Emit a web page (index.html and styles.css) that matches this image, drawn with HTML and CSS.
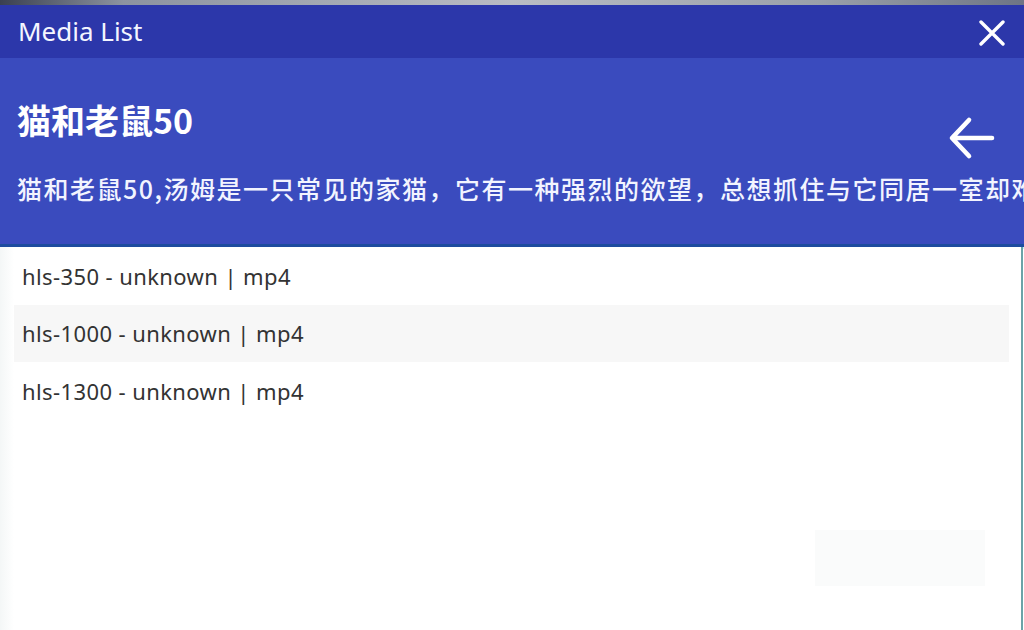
FILE: index.html
```html
<!DOCTYPE html>
<html lang="zh">
<head>
<meta charset="utf-8">
<title>Media List</title>
<link rel="stylesheet" href="styles.css">
</head>
<body>
<div class="topstrip"></div>
<div class="window">
  <div class="titlebar">
    <span class="title">Media List</span>
    <svg class="close" width="26" height="26" viewBox="0 0 26 26"><path d="M2 2 L24 24 M24 2 L2 24" stroke="#fff" stroke-width="3.4" stroke-linecap="round" fill="none"/></svg>
  </div>
  <div class="header">
    <div class="header-top">
      <h1 class="show-title">猫和老鼠50</h1>
      <svg class="back" width="48" height="44" viewBox="0 0 48 44"><path d="M44 22 H5 M21 4 L4 22 L21 40" stroke="#fff" stroke-width="4.6" stroke-linecap="round" stroke-linejoin="round" fill="none"/></svg>
    </div>
    <p class="desc">猫和老鼠50,汤姆是一只常见的家猫，它有一种强烈的欲望，总想抓住与它同居一室却难以抓到的老鼠杰瑞。</p>
  </div>
  <div class="body">
    <ul class="list">
      <li class="row">hls-350 - unknown | mp4</li>
      <li class="row alt">hls-1000 - unknown | mp4</li>
      <li class="row">hls-1300 - unknown | mp4</li>
    </ul>
    <div class="footer"><span class="ghost-btn"></span></div>
  </div>
</div>
</body>
</html>
```
FILE: styles.css
```css
* { box-sizing: border-box; }
html, body { margin: 0; padding: 0; }
body {
  width: 1024px;
  height: 630px;
  overflow: hidden;
  background: #fff;
  font-family: "Noto Sans", "Noto Sans CJK SC", sans-serif;
}
.topstrip {
  height: 5px;
  background: linear-gradient(90deg, #3a4050 0%, #8c93a0 12%, #b9bcc4 50%, #9aa0aa 80%, #6e7585 100%);
}
.window {
  display: flex;
  flex-direction: column;
  height: 625px;
}
.titlebar {
  height: 53px;
  background: #2c37aa;
  display: flex;
  align-items: center;
  justify-content: space-between;
  padding: 0 19px 0 18px;
}
.title {
  color: #f4f6ff;
  font-size: 26px;
  line-height: 1;
  margin-top: -1px;
}
.close { display: block; margin-top: 2px; }
.header {
  background: #3a4bbe;
  height: 189px;
  padding: 0 0 0 17px;
  border-bottom: 3px solid #1d4c9f;
  box-shadow: 0 2px 0 #c6f1fb;
  overflow: hidden;
}
.header-top {
  display: flex;
  align-items: flex-start;
  justify-content: space-between;
  padding-top: 40px;
  padding-right: 28px;
}
.show-title {
  margin: 0;
  color: #fff;
  font-family: "Noto Sans CJK SC", sans-serif;
  font-weight: 700;
  font-size: 34px;
  line-height: 44px;
}
.back { display: block; margin-top: 18px; }
.desc {
  margin: 11px 0 0;
  color: #f2f4ff;
  font-family: "Noto Sans CJK SC", sans-serif;
  font-weight: 500;
  font-size: 25px;
  line-height: 34px;
  letter-spacing: 1.5px;
  white-space: nowrap;
  overflow: hidden;
  text-overflow: clip;
}
.body {
  flex: 1;
  display: flex;
  flex-direction: column;
  padding: 0 0 0 14px;
  border-right: 2px solid #6aa3a8;
  margin-right: 1px;
  background: linear-gradient(90deg, #f4f7f7 0, #fff 14px);
}
.list {
  list-style: none;
  margin: 0;
  padding: 0;
  width: 995px;
}
.row {
  height: 57.5px;
  display: flex;
  align-items: center;
  padding-left: 8px;
  color: #333;
  font-size: 22px;
  letter-spacing: 0.4px;
  background: #fff;
}
.row.alt { background: #f7f7f7; }
.footer {
  display: flex;
  justify-content: flex-end;
  padding: 110px 36px 0 0;
}
.ghost-btn {
  width: 170px;
  height: 56px;
  background: #fafbfb;
}
```
